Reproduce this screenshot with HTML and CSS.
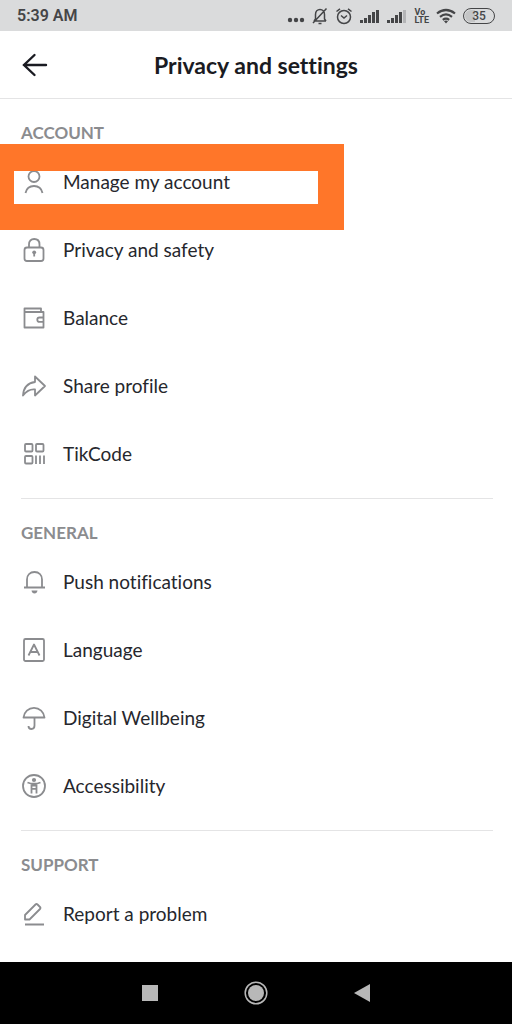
FILE: index.html
```html
<!DOCTYPE html>
<html lang="en">
<head>
<meta charset="utf-8">
<meta name="viewport" content="width=device-width, initial-scale=1">
<title>Privacy and settings</title>
<link rel="stylesheet" href="styles.css">
</head>
<body>
<div class="screen">
  <div class="status">
    <time class="clock">5:39 AM</time>
    <div class="indicators">
      <svg width="18" height="18" viewBox="0 0 18 18" class="solid"><circle cx="3" cy="13" r="2.200"/><circle cx="9" cy="13" r="2.200"/><circle cx="15" cy="13" r="2.200"/></svg>
      <svg width="16" height="18" viewBox="0 0 16 18" class="thin"><path d="M2 14h12M3.500 12V7.500C3.500 4.500 5.500 2.500 8 2.500s4.500 2 4.500 5V12l1.500 2M3.500 12L2 14M6.500 16.500h3M14.500 1.500L1 16"/></svg>
      <svg width="18" height="18" viewBox="0 0 18 18" class="thin"><circle cx="9" cy="10" r="6.500"/><path d="M6 8.500l3 2.500 3-2.500M1.500 4.500L5 1.800M16.500 4.500L13 1.800"/></svg>
      <svg width="20" height="18" viewBox="0 0 20 18" class="solid"><path d="M0 13h3v3H0zM4 11h3v5H4zM8 8h3v8H8zM12 5h3v11h-3zM16 3h3v13h-3z"/></svg>
      <svg width="20" height="18" viewBox="0 0 20 18" class="solid"><path d="M0 13h3v3H0zM4 11h3v5H4zM8 8h3v8H8zM12 5h3v11h-3z"/><path d="M16 3h3v13h-3z" opacity=".25"/></svg>
      <span class="volte"><span>Vo</span><span>LTE</span></span>
      <svg width="20" height="18" viewBox="0 0 20 18" class="wifi"><path d="M1 6.500Q10-.5 19 6.500M4 9.800Q10 5 16 9.800M6.800 12.800Q10 10.400 13.200 12.800"/><path class="wifi-dot" d="M8 14.200Q10 13 12 14.200L10 16.500z"/></svg>
      <span class="battery"><span class="battery-level">35</span></span>
    </div>
  </div>

  <header class="header">
    <button class="back" type="button" aria-label="Back">
      <svg width="26" height="26" viewBox="0 0 26 26"><path d="M12.500 3L2 13l10.500 10M2 13h22"/></svg>
    </button>
    <h1 class="title">Privacy and settings</h1>
  </header>

  <main class="content">
    <section class="group">
      <h2 class="group-title">Account</h2>
      <a class="row row-marked" href="#account">
        <svg class="icon" viewBox="0 0 26 26"><circle cx="13" cy="7.500" r="5.500"/><path d="M4.500 24c1-4.500 4.500-7 8.500-7s7.500 2.500 8.500 7"/></svg>
        <span class="label">Manage my account</span></a>
      <a class="row" href="#privacy">
        <svg class="icon" viewBox="0 0 26 26"><rect x="3.500" y="10.500" width="19" height="13.500" rx="2.500"/><path d="M8 10.500V7.500c0-3.500 2-5.500 5.200-5.500s5.300 2 5.300 5.500v3"/><circle class="fill" cx="13.200" cy="15.300" r="1.900"/><path d="M13.200 15.500v4"/></svg>
        <span class="label">Privacy and safety</span></a>
      <a class="row" href="#balance">
        <svg class="icon" viewBox="0 0 26 26"><path d="M20 6.500V3.500H3.500v19h19V7H3.500M22.500 12.500H18.500a2.200 2.200 0 0 0 0 4.400h4"/></svg>
        <span class="label">Balance</span></a>
      <a class="row" href="#share">
        <svg class="icon" viewBox="0 0 26 26"><path d="M14 3.500L24 13l-10 9.500v-6C9.500 16 5.500 18 2 22.500c.5-7.500 4.500-12.500 12-13.500z"/></svg>
        <span class="label">Share profile</span></a>
      <a class="row" href="#tikcode">
        <svg class="icon" viewBox="0 0 26 26"><rect x="4" y="3" width="7.500" height="7.500" rx="1"/><rect x="15" y="3" width="7.500" height="7.500" rx="1"/><rect x="4" y="15" width="7.500" height="7.500" rx="1"/><path d="M15 14.500v8.500M19 14.500v8.500M23 14.500v8.500"/></svg>
        <span class="label">TikCode</span></a>
    </section>

    <section class="group">
      <h2 class="group-title">General</h2>
      <a class="row" href="#push">
        <svg class="icon" viewBox="0 0 26 26"><path d="M3 18.500h21M6 18.500v-8C6 6 9 3 13.500 3S21 6 21 10.500v8"/><path class="fill" d="M10.500 21.500h6q-.5 3-3 3t-3-3z"/></svg>
        <span class="label">Push notifications</span></a>
      <a class="row" href="#language">
        <svg class="icon" viewBox="0 0 26 26"><rect x="3" y="2" width="20" height="22" rx="1.500"/><path d="M7.500 18.500L13 7.500l5.500 11M9.300 15h7.400"/></svg>
        <span class="label">Language</span></a>
      <a class="row" href="#wellbeing">
        <svg class="icon" viewBox="0 0 26 26"><path d="M2.500 12.500C3 7 7.500 2.800 13 2.800S23 7 23.500 12.500zM13.500 12.500v8c0 2-1 3.500-3 3.500s-3-1-3-3"/></svg>
        <span class="label">Digital Wellbeing</span></a>
      <a class="row" href="#accessibility">
        <svg class="icon" viewBox="0 0 26 26"><circle cx="13" cy="13" r="11"/><circle class="fill" cx="13" cy="7" r="2.100"/><path d="M6.500 9.500q6.500 2.500 13 0M10.500 11v9.500M15.500 11v9.500M10.500 12.500h5M10.500 15.800h5"/></svg>
        <span class="label">Accessibility</span></a>
    </section>

    <section class="group">
      <h2 class="group-title">Support</h2>
      <a class="row" href="#report">
        <svg class="icon" viewBox="0 0 26 26"><path d="M4 18.500V14L14.500 3.500q1-1 2 0l2.500 2.500q1 1 0 2L8.500 18.500zM4 23.500h19"/></svg>
        <span class="label">Report a problem</span></a>
    </section>
  </main>

  <nav class="navbar">
    <button type="button" aria-label="Recent apps"><svg width="24" height="24" viewBox="0 0 24 24"><path d="M4 4h16v16H4z"/></svg></button>
    <button type="button" aria-label="Home"><svg width="24" height="24" viewBox="0 0 24 24"><circle cx="12" cy="12" r="8"/><circle class="ring" cx="12" cy="12" r="10.800"/></svg></button>
    <button type="button" aria-label="Back"><svg width="24" height="24" viewBox="0 0 24 24"><path d="M4 12l16-9v18z"/></svg></button>
  </nav>
</div>
</body>
</html>
```
FILE: styles.css
```css
* { box-sizing: border-box; }

body {
  margin: 0;
  background: #fff;
  color: #26272d;
  font-family: Lato, "Open Sans", sans-serif;
  font-variant-ligatures: none;
}

svg { display: block; flex: none; }

button {
  border: 0;
  padding: 0;
  background: none;
  color: inherit;
}

.screen {
  display: flex;
  flex-direction: column;
  min-height: 100vh;
}

.status {
  display: flex;
  align-items: center;
  justify-content: space-between;
  height: 31px;
  padding: 0 17px;
  background: #dadbdc;
  color: #444547;
  font-family: Roboto, sans-serif;
}

.clock { font-size: 16px; font-weight: 600; }

.indicators { display: flex; align-items: center; gap: 7px; }

.solid { fill: currentColor; }

.thin { fill: none; stroke: currentColor; stroke-width: 1.5; }

.wifi { fill: none; stroke: currentColor; stroke-width: 2.2; }
.wifi-dot { fill: currentColor; stroke: none; }

.volte {
  display: flex;
  flex-direction: column;
  font-size: 9px;
  font-weight: 700;
  line-height: 8px;
}

.battery {
  width: 32px;
  border: 1px solid #444547;
  border-radius: 8px;
  padding: 1px;
  font-size: 12px;
  font-weight: 500;
  line-height: 12px;
  text-align: center;
}

.battery-level {
  display: block;
  border-radius: 6px;
  background: linear-gradient(90deg, #c4c5c6 35%, transparent 35%);
}

.header {
  display: grid;
  grid-template-columns: 26px 1fr 26px;
  align-items: center;
  height: 68px;
  padding: 0 22px;
  border-bottom: 1px solid #e4e4e5;
  color: #1a1b22;
}

.back svg { fill: none; stroke: currentColor; stroke-width: 2.4; stroke-linecap: round; }

.title {
  margin: 0;
  font-size: 23px;
  font-weight: 700;
  line-height: 28px;
  text-align: center;
}

.content { flex: 1; padding: 0 19px 0 21px; }

.group { padding: 24px 0 10px; border-bottom: 1px solid #e4e4e5; }
.group:last-child { border-bottom: 0; }

.group-title {
  margin: 0 0 5px;
  color: #8b8c8f;
  font-size: 17px;
  font-weight: 700;
  line-height: 20px;
  text-transform: uppercase;
}

.row {
  position: relative;
  display: flex;
  align-items: center;
  gap: 16px;
  height: 68px;
  color: inherit;
  text-decoration: none;
}

.row-marked::before {
  content: "";
  position: absolute;
  inset: -4px 149px -14px -21px;
  border: solid #ff7629;
  border-width: 27px 26px 26px 14px;
}

.icon {
  width: 26px;
  height: 26px;
  fill: none;
  stroke: #8b8c8f;
  stroke-width: 1.8;
  stroke-linejoin: round;
}

.icon .fill { fill: #8b8c8f; stroke: none; }

.label { font-size: 19px; line-height: 26px; }

.navbar {
  display: flex;
  align-items: center;
  justify-content: center;
  gap: 82px;
  height: 62px;
  background: #000;
}

.navbar svg { fill: #b8b8b8; }
.navbar .ring { fill: none; stroke: #b8b8b8; stroke-width: 1.5; }
```
